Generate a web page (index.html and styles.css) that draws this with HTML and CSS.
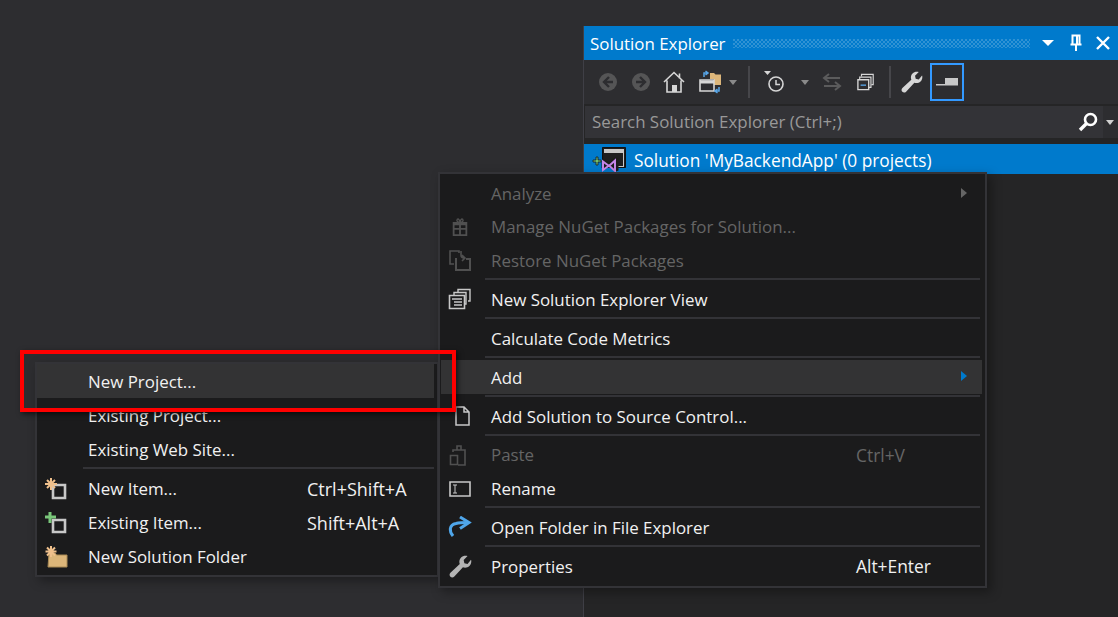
FILE: index.html
```html
<!DOCTYPE html>
<html lang="en">
<head>
    <meta charset="UTF-8">
    <title>Solution Explorer</title>
    <link rel="stylesheet" href="styles.css">
</head>
<body>
    <section class="explorer">
        <header class="title-bar">
            <span class="title-text">Solution Explorer</span>
            <span class="grip"></span>
            <svg class="title-icon caret-down" width="14" height="8" viewBox="0 0 14 8"><path d="M1 1h12L7 7z" fill="#fff"/></svg>
            <svg class="title-icon pin" width="14" height="18" viewBox="0 0 14 18"><path d="M3.500 1.500h7v9h-7zM8 2v8M1.500 10.500h11M7 11v6" fill="none" stroke="#fff" stroke-width="2"/></svg>
            <svg class="title-icon" width="16" height="16" viewBox="0 0 16 16"><path d="M2 2l12 12M14 2L2 14" stroke="#fff" stroke-width="2.400"/></svg>
        </header>

        <div class="toolbar">
            <span class="tool w-33"><svg width="20" height="20" viewBox="0 0 20 20"><circle cx="10" cy="10" r="9" fill="#555556"/><path d="M11 5l-5 5 5 5M6.500 10H15" fill="none" stroke="#2d2d30" stroke-width="2.400"/></svg></span>
            <span class="tool w-33"><svg width="20" height="20" viewBox="0 0 20 20"><circle cx="10" cy="10" r="9" fill="#555556"/><path d="M9 5l5 5-5 5M13.500 10H5" fill="none" stroke="#2d2d30" stroke-width="2.400"/></svg></span>
            <span class="tool w-33"><svg width="22" height="22" viewBox="0 0 22 22"><path d="M1 11L11 1.500 21 11M4 9.500V21h14V9.500M16.500 2.500v5" fill="none" stroke="#d6d6d6" stroke-width="1.600"/><path d="M9 14h5v7H9z" fill="#d6d6d6"/></svg></span>
            <span class="tool w-39"><svg width="24" height="24" viewBox="0 0 24 24"><path d="M12 3h4l1.500 1.500H23V15h-7V9h-4z" fill="#dcb67a"/><path d="M2 10h14v11H2z" fill="#2d2d30" stroke="#d6d6d6" stroke-width="1.600"/><path d="M2 12h14" stroke="#d6d6d6" stroke-width="3"/><path d="M6 7V3h3M7.500 1l2.500 2-2.500 2" fill="none" stroke="#58a6e8" stroke-width="1.500"/><path d="M21 17v4h-3M19.500 19l-2.500 2 2.500 2" fill="none" stroke="#58a6e8" stroke-width="1.500"/></svg></span>
            <span class="tool w-8"><i class="mini-caret"></i></span>
            <span class="tool-sep first"></span>
            <span class="tool w-42"><svg width="24" height="24" viewBox="0 0 24 24"><path d="M1 1h7L4.500 5z" fill="#d6d6d6"/><circle cx="13" cy="14" r="7" fill="none" stroke="#d6d6d6" stroke-width="1.600"/><path d="M13 10v4.500h4" fill="none" stroke="#d6d6d6" stroke-width="1.500"/></svg></span>
            <span class="tool w-18"><i class="mini-caret"></i></span>
            <span class="tool w-36"><svg width="20" height="20" viewBox="0 0 20 20"><path d="M7 2L2 6l5 4M2 6h16M13 10l5 4-5 4M18 14H2" fill="none" stroke="#5b5b5c" stroke-width="2"/></svg></span>
            <span class="tool w-32"><svg width="18" height="18" viewBox="0 0 20 20"><path d="M5 4V1.500h13V13h-2" fill="none" stroke="#d6d6d6" stroke-width="1.300"/><path d="M3 7V4.500h12.500V16H13" fill="none" stroke="#d6d6d6" stroke-width="1.300"/><path d="M1 7.500h12v11H1z" fill="#2d2d30" stroke="#d6d6d6" stroke-width="1.500"/><path d="M4 13.500h6" stroke="#58a6e8" stroke-width="1.500"/></svg></span>
            <span class="tool-sep second"></span>
            <span class="tool w-34"><svg width="22" height="22" viewBox="0 0 16 16"><path d="M15.500 4.500c0 2.500-2 4.300-4.300 4.300-.6 0-1-.1-1.500-.3L3.700 15c-.8.800-2 .800-2.700.1-.8-.8-.8-2 0-2.800l6.500-6c-.2-.5-.3-1-.3-1.500C7.200 2.400 9 .5 11.500.5c.5 0 1 .1 1.400.2L10.200 3.500l.5 2.200 2.200.5 2.400-2.900c.1.300.2.500.2.700z" fill="#d6d6d6"/></svg></span>
            <span class="tool preview-btn"><svg width="22" height="9" viewBox="0 0 22 9"><path d="M9 0h13v6H9zM0 6h22v1.500H0z" fill="#c8c8c8"/></svg></span>
        </div>

        <div class="search-row">
            <div class="search-box">
                <span class="search-text">Search Solution Explorer (Ctrl+;)</span>
                <svg width="22" height="22" viewBox="0 0 22 22"><circle cx="13.500" cy="8.500" r="5.500" fill="none" stroke="#fff" stroke-width="2.600"/><path d="M9.500 12.500L3 19" stroke="#fff" stroke-width="3.400"/></svg>
            </div>
            <i class="search-caret"></i>
        </div>

        <div class="tree">
            <div class="tree-row">
                <svg class="solution-icon" width="36" height="26" viewBox="0 0 36 26"><path d="M2 14h3v-3h2v3h3v2H7v3H5v-3H2z" fill="#71c16f" stroke="#1c1c1c" stroke-width=".8"/><path d="M11.500 1.500h23v20h-23z" fill="#1c1c1c" stroke="#111"/><path d="M13 3h20v18H13z" fill="#c8c8c8"/><path d="M13 7h19v13H13z" fill="#1f1f20"/><path d="M10.500 15l3.500-1.500 4 3 6-5.500 3.500 1.500v12L24 26l-6-5.500-4 3-3.500-1.500z" fill="#1c1c1c"/><path d="M12 15.500l6 4.500 6-5.500v10.500l-6-5.500-6 4.500z" fill="none" stroke="#c586e8" stroke-width="2"/></svg>
                <span>Solution 'MyBackendApp' (0 projects)</span>
            </div>
        </div>
    </section>

    <!-- submenu sits under the main context menu -->
    <div class="menu sub-menu">
        <div class="row hover"><span class="slot"></span><span class="label">New Project...</span></div>
        <div class="row"><span class="slot"></span><span class="label">Existing Project...</span></div>
        <div class="row"><span class="slot"></span><span class="label">Existing Web Site...</span></div>
        <div class="sep"></div>
        <div class="row">
            <span class="slot"><svg width="24" height="24" viewBox="0 0 24 24"><path d="M9 8h12v13H9z" fill="none" stroke="#c8c8c8" stroke-width="2.600"/><path d="M7 1v12M1 7h12M3 3l8 8M11 3l-8 8" stroke="#efc08c" stroke-width="2"/></svg></span>
            <span class="label">New Item...</span><span class="keys">Ctrl+Shift+A</span>
        </div>
        <div class="row">
            <span class="slot"><svg width="24" height="24" viewBox="0 0 24 24"><path d="M9 9h12v12H9z" fill="none" stroke="#c8c8c8" stroke-width="2.600"/><path d="M6 1v11M1 6h11" stroke="#7ac77a" stroke-width="3"/></svg></span>
            <span class="label">Existing Item...</span><span class="keys">Shift+Alt+A</span>
        </div>
        <div class="row">
            <span class="slot"><svg width="24" height="24" viewBox="0 0 24 24"><path d="M5 8h6l1.500 2H23v12H4z" fill="#dcb67a" stroke="#a98a55"/><path d="M7 1v11M1.500 6.500h11M3 2.500l8 8M11 2.500l-8 8" stroke="#efc08c" stroke-width="2"/></svg></span>
            <span class="label">New Solution Folder</span>
        </div>
    </div>

    <div class="menu main-menu">
        <div class="row off"><span class="slot"></span><span class="label">Analyze</span><i class="arrow"></i></div>
        <div class="row off">
            <span class="slot"><svg width="20" height="22" viewBox="0 0 22 22"><path d="M4 8h14v12H4zM4 13h14M11 8v12M3 6.500h16" fill="none" stroke="#505050" stroke-width="2"/><path d="M11 6C8 6 7 4 8 2.500 9.500 1.500 11 4 11 6c0-2 1.500-4.500 3-3.500C15 4 14 6 11 6z" fill="none" stroke="#505050" stroke-width="1.500"/></svg></span>
            <span class="label">Manage NuGet Packages for Solution...</span>
        </div>
        <div class="row off">
            <span class="slot"><svg width="24" height="22" viewBox="0 0 24 22"><path d="M6 15H2V2h9v2" fill="none" stroke="#505050" stroke-width="1.600"/><path d="M8 9v12h14V10h-4" fill="none" stroke="#505050" stroke-width="2"/><path d="M13 2v4c0 2 1 3 3 3h1M14 6l3 3-3 3" fill="none" stroke="#505050" stroke-width="1.600"/></svg></span>
            <span class="label">Restore NuGet Packages</span>
        </div>
        <div class="sep"></div>
        <div class="row">
            <span class="slot"><svg width="24" height="22" viewBox="0 0 24 22"><path d="M10 4V1.500h12V13h-2" fill="none" stroke="#c8c8c8" stroke-width="1.400"/><path d="M6 7V4.500h12V16h-2" fill="none" stroke="#c8c8c8" stroke-width="1.400"/><path d="M1.500 7.500h15v13h-15z" fill="#1b1b1c" stroke="#c8c8c8" stroke-width="1.600"/><path d="M4 11h10M6 14h8M6 17h8" stroke="#c8c8c8" stroke-width="1.500"/></svg></span>
            <span class="label">New Solution Explorer View</span>
        </div>
        <div class="sep"></div>
        <div class="row"><span class="slot"></span><span class="label">Calculate Code Metrics</span></div>
        <div class="sep"></div>
        <div class="row hover"><span class="slot"></span><span class="label">Add</span><i class="arrow blue"></i></div>
        <div class="sep"></div>
        <div class="row">
            <span class="slot doc"><svg width="18" height="20" viewBox="0 0 18 20"><path d="M3 1h8l5 5v13H3zM11 1v5h5" fill="none" stroke="#c8c8c8" stroke-width="1.500"/></svg></span>
            <span class="label">Add Solution to Source Control...</span>
        </div>
        <div class="sep"></div>
        <div class="row off">
            <span class="slot"><svg width="22" height="22" viewBox="0 0 22 22"><path d="M4 8V6h12v15H9" fill="none" stroke="#505050" stroke-width="1.600"/><path d="M8 6V2h4v4" fill="none" stroke="#505050" stroke-width="1.600"/><path d="M1.500 11.500h7v9h-7z" fill="none" stroke="#505050" stroke-width="1.600"/></svg></span>
            <span class="label">Paste</span><span class="keys">Ctrl+V</span>
        </div>
        <div class="row">
            <span class="slot"><svg width="22" height="16" viewBox="0 0 22 16"><path d="M1 1h20v14H1z" fill="none" stroke="#c8c8c8" stroke-width="1.600"/><path d="M4 4h4M4 12h4M6 4v8" fill="none" stroke="#c8c8c8" stroke-width="1"/></svg></span>
            <span class="label">Rename</span>
        </div>
        <div class="sep"></div>
        <div class="row">
            <span class="slot"><svg width="24" height="22" viewBox="0 0 24 22"><path d="M5 20C1 15 1 9 8 7.500c3-.8 8-1 12-1" fill="none" stroke="#4fa6ea" stroke-width="3"/><path d="M12 1l9 5.500-9 6" fill="none" stroke="#4fa6ea" stroke-width="3"/></svg></span>
            <span class="label">Open Folder in File Explorer</span>
        </div>
        <div class="sep"></div>
        <div class="row">
            <span class="slot"><svg width="23" height="23" viewBox="0 0 16 16"><path d="M15.500 4.500c0 2.500-2 4.300-4.300 4.300-.6 0-1-.1-1.500-.3L3.700 15c-.8.800-2 .800-2.700.1-.8-.8-.8-2 0-2.800l6.500-6c-.2-.5-.3-1-.3-1.500C7.200 2.400 9 .5 11.500.5c.5 0 1 .1 1.400.2L10.200 3.500l.5 2.200 2.200.5 2.400-2.900c.1.300.2.500.2.700z" fill="#b4b4b4"/></svg></span>
            <span class="label">Properties</span><span class="keys">Alt+Enter</span>
        </div>
    </div>

    <div class="callout"></div>
</body>
</html>
```

FILE: styles.css
```css
html, body {
    height: 100%;
}

body {
    margin: 0;
    overflow: hidden;
    background-color: #2d2d30;
    font-family: "Open Sans", "Noto Sans", sans-serif;
    font-size: 16.9px;
    color: #f1f1f1;
}

/* solution explorer panel */
.explorer {
    box-sizing: border-box;
    height: 591px;
    margin: 26px 0 0 583px;
    border-left: 1px solid #3f3f46;
    background-color: #252526;
}

.title-bar {
    display: flex;
    align-items: center;
    height: 34px;
    padding: 0 6px;
    background-color: #007acc;
    color: #fff;
}

.title-text {
    width: 143px;
}

.grip {
    width: 297px;
    height: 9px;
    margin-top: 1px;
    background-image:
        radial-gradient(circle at 1px 1px, #2f92d4 1px, transparent 1.200px),
        radial-gradient(circle at 3px 3px, #2f92d4 1px, transparent 1.200px);
    background-size: 4px 4px;
}

.title-icon {
    flex: none;
}

.caret-down {
    margin-left: 11px;
}

.pin {
    margin-left: 14px;
    margin-right: 12px;
}

.toolbar {
    display: flex;
    align-items: center;
    height: 44px;
    padding-left: 7px;
    background-color: #2d2d30;
}

.tool {
    display: flex;
    align-items: center;
    justify-content: center;
    flex: none;
    height: 38px;
}

.w-8 { width: 8px; }
.w-18 { width: 18px; }
.w-32 { width: 32px; }
.w-33 { width: 33px; }
.w-34 { width: 34px; }
.w-36 { width: 36px; }
.w-39 { width: 39px; }
.w-42 { width: 42px; }

.mini-caret {
    flex: none;
    width: 0;
    height: 0;
    border-left: 4.500px solid transparent;
    border-right: 4.500px solid transparent;
    border-top: 5px solid #8a8a8a;
}

.tool-sep {
    flex: none;
    width: 2px;
    height: 32px;
    background-color: #46464a;
}

.tool-sep.first {
    margin: 0 4px 0 11px;
}

.tool-sep.second {
    margin: 0 4px 0 7px;
}

.preview-btn {
    box-sizing: border-box;
    width: 34px;
    margin-left: 1px;
    border: 2px solid #3399ff;
}

.search-row {
    display: flex;
    align-items: center;
    height: 32px;
    margin-top: 2px;
    margin-left: 1px;
    background-color: #2d2d30;
}

.search-box {
    display: flex;
    align-items: center;
    width: 518px;
    height: 100%;
    background-color: #333337;
}

.search-text {
    flex: 1;
    padding: 0 0 2px 7px;
    color: #999;
}

.search-box svg {
    margin-right: 4px;
}

.search-caret {
    flex: none;
    width: 0;
    height: 0;
    margin-left: 3px;
    border-left: 4.500px solid transparent;
    border-right: 4.500px solid transparent;
    border-top: 5px solid #d0d0d0;
}

.tree {
    padding-top: 6px;
}

.tree-row {
    box-sizing: border-box;
    display: flex;
    align-items: center;
    height: 30px;
    padding-left: 7px;
    padding-top: 3px;
    background-color: #007acc;
    color: #fff;
    font-size: 17.300px;
}

.tree-row .solution-icon {
    flex: none;
    margin: -3px 7px 0 0;
    overflow: visible;
}

/* context menus */
.menu {
    position: absolute;
    box-sizing: border-box;
    border: 2px solid #333337;
    background-color: #1b1b1c;
    box-shadow: 4px 4px 10px rgba(0, 0, 0, 0.35);
}

.main-menu {
    top: 172px;
    left: 438px;
    width: 549px;
    height: 416px;
    padding: 2.500px 3px 0 1px;
}

.sub-menu {
    top: 362px;
    left: 35px;
    width: 404px;
    height: 215px;
    padding: 0 3px 0 0;
}

.row {
    display: flex;
    align-items: center;
    height: 33.600px;
    position: relative;
}

.sub-menu .row {
    box-sizing: border-box;
    height: 34px;
    padding-top: 1px;
}

.row.hover {
    background-color: #333334;
}

.row.off {
    color: #656565;
}

.slot {
    display: flex;
    align-items: center;
    justify-content: center;
    flex: none;
    width: 38px;
    margin-right: 12px;
}

.slot.doc {
    padding-left: 4px;
    box-sizing: border-box;
}

.sub-menu .slot {
    margin-right: 13px;
}

.label {
    flex: 1;
    white-space: nowrap;
}

.keys {
    flex: none;
    width: 126px;
    white-space: nowrap;
    font-size: 17.400px;
}

.sub-menu .keys {
    width: 127px;
    font-size: 18px;
}

.sep {
    height: 2px;
    margin: 1px 2px 2.300px 44px;
    background-color: #333337;
}

.sub-menu .sep {
    margin: 1px 0 2px 46px;
}

.arrow {
    position: absolute;
    right: 15px;
    top: 11px;
    width: 0;
    height: 0;
    border-top: 5.500px solid transparent;
    border-bottom: 5.500px solid transparent;
    border-left: 6px solid #656565;
}

.arrow.blue {
    border-left-color: #007acc;
}

/* red highlight drawn over the screenshot */
.callout {
    position: absolute;
    top: 350px;
    left: 20px;
    box-sizing: border-box;
    width: 436px;
    height: 62px;
    border: 4px solid #f00;
    box-shadow: 2px 2px 5px rgba(0, 0, 0, 0.6);
}
```
